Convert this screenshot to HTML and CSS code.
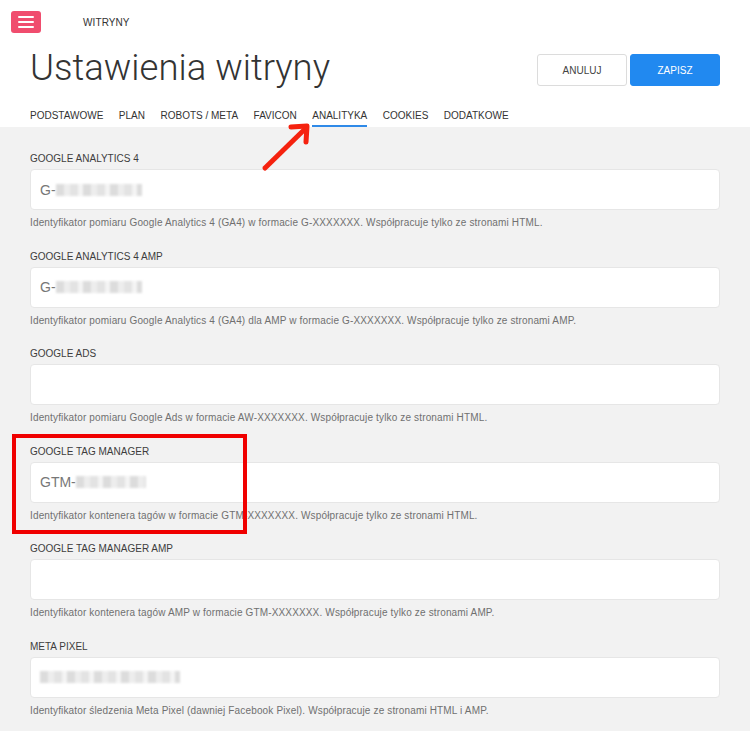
FILE: index.html
```html
<!DOCTYPE html>
<html lang="pl">
<head>
<meta charset="utf-8">
<title>Ustawienia witryny</title>
<link rel="stylesheet" href="styles.css">
</head>
<body>
<header class="header">
  <div class="topbar">
    <button class="menu-btn" aria-label="Menu">
      <svg width="16" height="12" viewBox="0 0 16 12"><g stroke="#fff" stroke-width="2" stroke-linecap="round"><line x1="1" y1="1" x2="15" y2="1"/><line x1="1" y1="6" x2="15" y2="6"/><line x1="1" y1="11" x2="15" y2="11"/></g></svg>
    </button>
    <span class="crumb">WITRYNY</span>
  </div>
  <div class="title-row">
    <h1 class="title">Ustawienia witryny</h1>
    <div class="actions">
      <button class="btn btn-cancel">ANULUJ</button>
      <button class="btn btn-save">ZAPISZ</button>
    </div>
  </div>
  <nav class="tabs">
    <a class="tab">PODSTAWOWE</a>
    <a class="tab">PLAN</a>
    <a class="tab">ROBOTS / META</a>
    <a class="tab">FAVICON</a>
    <a class="tab active">ANALITYKA</a>
    <a class="tab">COOKIES</a>
    <a class="tab">DODATKOWE</a>
  </nav>
</header>
<main class="content">
  <section class="field">
    <label class="label">GOOGLE ANALYTICS 4</label>
    <div class="input"><span class="val">G-</span><span class="blur w86"></span></div>
    <p class="help">Identyfikator pomiaru Google Analytics 4 (GA4) w formacie G-XXXXXXX. Współpracuje tylko ze stronami HTML.</p>
  </section>
  <section class="field">
    <label class="label">GOOGLE ANALYTICS 4 AMP</label>
    <div class="input"><span class="val">G-</span><span class="blur w86"></span></div>
    <p class="help">Identyfikator pomiaru Google Analytics 4 (GA4) dla AMP w formacie G-XXXXXXX. Współpracuje tylko ze stronami AMP.</p>
  </section>
  <section class="field">
    <label class="label">GOOGLE ADS</label>
    <div class="input"></div>
    <p class="help">Identyfikator pomiaru Google Ads w formacie AW-XXXXXXX. Współpracuje tylko ze stronami HTML.</p>
  </section>
  <section class="field">
    <label class="label">GOOGLE TAG MANAGER</label>
    <div class="input"><span class="val">GTM-</span><span class="blur w70"></span></div>
    <p class="help">Identyfikator kontenera tagów w formacie GTM-XXXXXXX. Współpracuje tylko ze stronami HTML.</p>
  </section>
  <section class="field">
    <label class="label">GOOGLE TAG MANAGER AMP</label>
    <div class="input"></div>
    <p class="help">Identyfikator kontenera tagów AMP w formacie GTM-XXXXXXX. Współpracuje tylko ze stronami AMP.</p>
  </section>
  <section class="field">
    <label class="label">META PIXEL</label>
    <div class="input"><span class="blur w140"></span></div>
    <p class="help">Identyfikator śledzenia Meta Pixel (dawniej Facebook Pixel). Współpracuje ze stronami HTML i AMP.</p>
  </section>
</main>
<div class="highlight-box"></div>
<svg class="arrow" width="60" height="60" viewBox="0 0 60 60">
  <g stroke="#f5220f" stroke-width="5" stroke-linecap="round" stroke-linejoin="round" fill="none">
    <line x1="7" y1="52" x2="48" y2="12"/>
    <polyline points="33,11 49,10 48,26"/>
  </g>
</svg>
</body>
</html>
```
FILE: styles.css
```css
* { box-sizing: border-box; }
html, body { margin: 0; padding: 0; }
body {
  font-family: "Liberation Sans", Arial, sans-serif;
  background: #f2f2f2;
  color: #333;
  min-height: 731px;
}
.header { background: #fff; }
.topbar {
  display: flex;
  align-items: center;
  padding: 11px 11px 0;
  height: 33px;
}
.menu-btn {
  width: 30px;
  height: 22px;
  border: none;
  border-radius: 3px;
  background: #f04d6e;
  display: flex;
  align-items: center;
  justify-content: center;
  padding: 0;
}
.crumb {
  margin-left: 42px;
  font-size: 10px;
  color: #333;
  letter-spacing: 0.1px;
}
.title-row {
  display: flex;
  justify-content: space-between;
  align-items: flex-start;
  padding: 0 30px;
  margin-top: 13px;
}
.title {
  margin: 0;
  font-family: Roboto, "Liberation Sans", sans-serif;
  font-weight: 300;
  font-size: 36.5px;
  line-height: 44px;
  color: #333;
}
.actions {
  display: flex;
  gap: 3px;
  margin-top: 8px;
}
.btn {
  width: 90px;
  height: 32px;
  border-radius: 3px;
  font-family: "Liberation Sans", Arial, sans-serif;
  font-size: 10px;
  cursor: pointer;
}
.btn-cancel {
  background: #fff;
  border: 1px solid #dcdcdc;
  color: #444;
}
.btn-save {
  background: #2189f0;
  border: 1px solid #2189f0;
  color: #fff;
}
.tabs {
  display: flex;
  gap: 15.5px;
  padding: 0 30px;
}
.tab {
  font-size: 10px;
  line-height: 14px;
  padding: 19px 0 2px;
  border-bottom: 2px solid transparent;
  color: #333;
}
.tab.active { border-bottom-color: #2f8ae8; }
.content {
  padding: 25px 30px 0;
}
.field { margin-bottom: 19.5px; }
.label {
  display: block;
  font-size: 10px;
  line-height: 14px;
  color: #3d3d3d;
  margin-bottom: 3px;
}
.input {
  height: 41px;
  background: #fff;
  border: 1px solid #e6e6e6;
  border-radius: 4px;
  display: flex;
  align-items: center;
  padding: 0 9px;
}
.val {
  font-size: 14px;
  color: #777;
}
.blur {
  display: inline-block;
  height: 12px;
  background:
    repeating-linear-gradient(90deg, #d9d9d9 0 8px, #ececec 8px 14px, #e1e1e1 14px 22px, #f3f3f3 22px 27px);
  filter: blur(1.2px);
  opacity: 0.9;
}
.w86 { width: 86px; }
.w70 { width: 70px; }
.w140 { width: 140px; }
.help {
  margin: 6px 0 0;
  font-size: 10px;
  line-height: 14px;
  letter-spacing: 0.15px;
  color: #707070;
}
.highlight-box {
  position: absolute;
  left: 12px;
  top: 434px;
  width: 235px;
  height: 100px;
  border: 4px solid #f00000;
}
.arrow {
  position: absolute;
  left: 258px;
  top: 116px;
}
```
